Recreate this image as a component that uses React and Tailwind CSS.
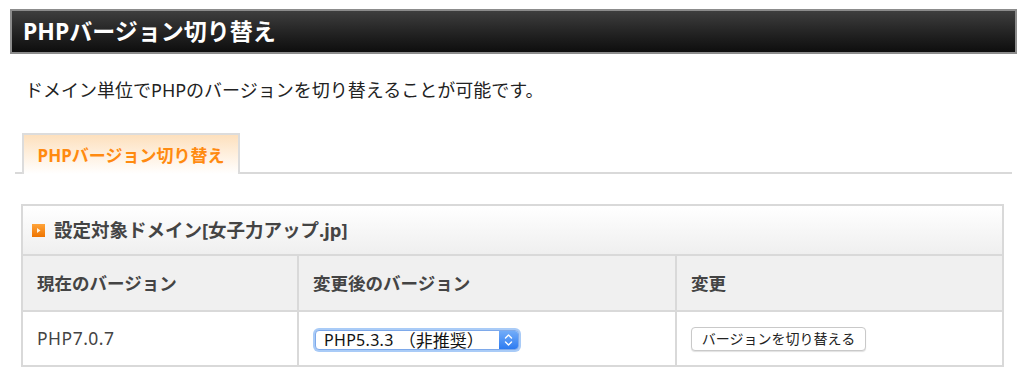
import React from "react";

const FONT = { fontFamily: '"Noto Sans", "Noto Sans CJK JP", sans-serif' };

function BulletIcon() {
  return (
    <svg width="13" height="13" viewBox="0 0 13 13" className="shrink-0">
      <defs>
        <linearGradient id="bullet" x1="0" y1="0" x2="0" y2="1">
          <stop offset="0" stopColor="#ffa43a" />
          <stop offset="1" stopColor="#ee7400" />
        </linearGradient>
      </defs>
      <rect x="0" y="0" width="13" height="13" fill="url(#bullet)" />
      <polygon points="5,4 8.5,6.5 5,9" fill="#fff3e0" />
    </svg>
  );
}

function VersionSelect({ version, note }) {
  return (
    <div className="w-[208px] h-[24px] rounded-[6px] bg-[#a9cbf7] p-[2px]">
      <div className="flex h-full rounded-[4px] border border-[#7ea9ea] bg-white overflow-hidden">
        <div className="flex-1 flex items-center pl-[8px] leading-none text-[#111] whitespace-pre">
          <span className="text-[16px] tracking-[0.3px]">{version}</span>
          <span className="ml-[5px] text-[17px]">{note}</span>
        </div>
        <div className="w-[19px] flex items-center justify-center bg-gradient-to-b from-[#72acf8] to-[#2b7bf1]">
          <svg width="9" height="14" viewBox="0 0 9 14" fill="none" stroke="#fff" strokeWidth="1.4" strokeLinecap="round" strokeLinejoin="round">
            <polyline points="1.5,5 4.5,2 7.5,5" />
            <polyline points="1.5,9 4.5,12 7.5,9" />
          </svg>
        </div>
      </div>
    </div>
  );
}

export default function App() {
  return (
    <div className="w-[1024px] h-[383px] bg-white overflow-hidden" style={FONT}>
      {/* Title bar */}
      <div className="mt-[9px] ml-[10px] w-[1007px] h-[45px] border-2 border-[#8c8c8c] bg-gradient-to-b from-[#3e3e3e] to-[#0e0e0e] flex items-center pl-[11px]">
        <h1 className="text-[23px] font-bold text-white leading-none">PHPバージョン切り替え</h1>
      </div>

      <p className="mt-[23px] ml-[25px] text-[18px] leading-[26px] text-[#222]">
        ドメイン単位でPHPのバージョンを切り替えることが可能です。
      </p>

      {/* Tabs */}
      <div className="mt-[30px] ml-[15px] w-[997px] flex items-end">
        <div className="w-[7px] border-b-2 border-[#d9d9d9]" />
        <div className="w-[218px] h-[41px] border-t-2 border-x-2 border-[#dcdcdc] bg-gradient-to-b from-[#fde0bd] to-white flex items-center justify-center pt-[2px]">
          <span className="text-[17px] font-bold text-[#ff8a10] leading-none">PHPバージョン切り替え</span>
        </div>
        <div className="flex-1 border-b-2 border-[#d9d9d9]" />
      </div>

      {/* Domain box */}
      <div className="mt-[30px] ml-[21px] w-[983px] border-2 border-[#d9d9d9]">
        <div className="h-[50px] border-b-2 border-[#d9d9d9] bg-gradient-to-b from-white to-[#efefef] flex items-center gap-[9px] pl-[9px]">
          <BulletIcon />
          <span className="text-[18.5px] font-bold text-[#444] leading-none">設定対象ドメイン[女子力アップ.jp]</span>
        </div>

        <div className="grid grid-cols-[276px_378px_1fr] bg-[#f0f0f0] border-b-2 border-[#d9d9d9] h-[56px] text-[17.5px] font-bold text-[#444]">
          <div className="border-r-2 border-[#d9d9d9] flex items-center pl-[14px]">現在のバージョン</div>
          <div className="border-r-2 border-[#d9d9d9] flex items-center pl-[14px]">変更後のバージョン</div>
          <div className="flex items-center pl-[14px]">変更</div>
        </div>

        <div className="grid grid-cols-[276px_378px_1fr] h-[53px] text-[17.5px] text-[#444]">
          <div className="border-r-2 border-[#d9d9d9] flex items-center pl-[14px] tracking-[0.5px]">PHP7.0.7</div>
          <div className="border-r-2 border-[#d9d9d9] flex items-center pl-[14px] pt-[3px]">
            <VersionSelect version="PHP5.3.3" note="（非推奨）" />
          </div>
          <div className="flex items-center pl-[14px] pt-[1px]">
            <button className="w-[175px] h-[24px] rounded-[4px] border border-[#c9c9c9] bg-white shadow-[0_1px_1px_rgba(0,0,0,0.12)] text-[14px] leading-none text-[#222]">
              バージョンを切り替える
            </button>
          </div>
        </div>
      </div>
    </div>
  );
}
